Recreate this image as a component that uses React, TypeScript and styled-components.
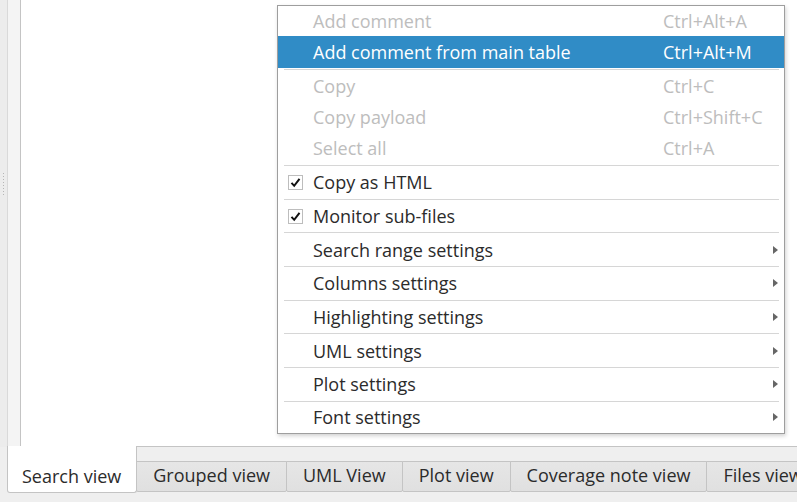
import React from "react";
import styled, { createGlobalStyle } from "styled-components";

const GlobalStyle = createGlobalStyle`
  html, body { margin: 0; padding: 0; }
  body {
    background: #efefef;
    font-family: "Open Sans", "Noto Sans", sans-serif;
    font-size: 18px;
    color: #2b2b2b;
    overflow: hidden;
  }
`;

const Window = styled.div`
  position: relative;
  width: 797px;
  height: 502px;
  display: flex;
  flex-direction: column;
  background: #efefef;
  overflow: hidden;
`;

const Top = styled.div`
  display: flex;
  height: 447px;
  flex: none;
`;

const Splitter = styled.div`
  width: 7px;
  border-right: 1px solid #d9d9d9;
  background: #ececec;
  display: flex;
  align-items: center;
  justify-content: center;
`;

const Grip = styled.div`
  width: 1px;
  height: 22px;
  margin-top: -80px;
  background: repeating-linear-gradient(to bottom, #b5b5b5 0 1px, transparent 1px 3px);
`;

const Gutter = styled.div`
  width: 12px;
  background: #f4f4f4;
`;

const Pane = styled.div`
  flex: 1;
  background: #ffffff;
  border-left: 1px solid #c4c4c4;
  border-bottom: 1px solid #c4c4c4;
`;

const TabBar = styled.div`
  display: flex;
  align-items: flex-start;
  padding-left: 7px;
  margin-top: -1px;
  white-space: nowrap;
`;

const Tab = styled.div<{ $active?: boolean }>`
  flex: none;
  box-sizing: border-box;
  border: 1px solid #c4c4c4;
  color: #2b2b2b;
  line-height: 24px;
  ${(p) =>
    p.$active
      ? `
    height: 47px;
    padding: 18px 15px 0 14px;
    background: #ffffff;
    border-top: none;
    border-radius: 0 0 3px 3px;
  `
      : `
    margin-top: 15px;
    height: 31px;
    padding: 1px 16px 0 16px;
    margin-left: -1px;
    background: linear-gradient(#e6e6e6, #e0e0e0);
    border-radius: 0 0 2px 2px;
  `}
`;

const Menu = styled.div`
  position: absolute;
  left: 277px;
  top: 5px;
  width: 508px;
  box-sizing: border-box;
  background: #ffffff;
  border: 1px solid #9e9e9e;
  box-shadow: 1px 2px 4px rgba(0, 0, 0, 0.18);
  display: flex;
  flex-direction: column;
`;

const Row = styled.div<{ $h: number; $disabled?: boolean; $selected?: boolean }>`
  display: grid;
  grid-template-columns: 35px 350px 1fr 14px;
  align-items: center;
  height: ${(p) => p.$h}px;
  color: ${(p) => (p.$selected ? "#ffffff" : p.$disabled ? "#bdbdbd" : "#2b2b2b")};
  background: ${(p) => (p.$selected ? "#308cc6" : "transparent")};
  white-space: nowrap;
`;

const Label = styled.span`
  grid-column: 2;
  line-height: 1;
`;

const Shortcut = styled.span`
  grid-column: 3;
  line-height: 1;
`;

const CheckCell = styled.span`
  grid-column: 1;
  display: flex;
  padding-left: 10px;
`;

const CheckBox = styled.span`
  width: 15px;
  height: 15px;
  box-sizing: border-box;
  border: 1px solid #bdbdbd;
  background: #fff;
  display: flex;
  align-items: center;
  justify-content: center;
`;

const ArrowCell = styled.span`
  grid-column: 4;
  display: flex;
  justify-content: flex-start;
  padding-left: 3px;
`;

const Arrow = styled.span`
  width: 0;
  height: 0;
  border-top: 4px solid transparent;
  border-bottom: 4px solid transparent;
  border-left: 5px solid #666;
`;

const Separator = styled.div<{ $gap?: number }>`
  height: 1px;
  margin: ${(p) => p.$gap ?? 0}px 5px 0 6px;
  background: #d6d6d6;
`;

const Check = () => (
  <svg width="11" height="11" viewBox="0 0 11 11">
    <path d="M1.5 5.8 L4.2 8.8 L9.5 1.8" fill="none" stroke="#111" strokeWidth="2" />
  </svg>
);

type Item = {
  label: string;
  shortcut?: string;
  disabled?: boolean;
  selected?: boolean;
  checked?: boolean;
  sub?: boolean;
};

const MenuRow: React.FC<{ item: Item; h: number }> = ({ item, h }) => (
  <Row $h={h} $disabled={item.disabled} $selected={item.selected}>
    {item.checked && (
      <CheckCell>
        <CheckBox>
          <Check />
        </CheckBox>
      </CheckCell>
    )}
    <Label>{item.label}</Label>
    {item.shortcut && <Shortcut>{item.shortcut}</Shortcut>}
    {item.sub && (
      <ArrowCell>
        <Arrow />
      </ArrowCell>
    )}
  </Row>
);

const lower: Item[] = [
  { label: "Copy as HTML", checked: true },
  { label: "Monitor sub-files", checked: true },
  { label: "Search range settings", sub: true },
  { label: "Columns settings", sub: true },
  { label: "Highlighting settings", sub: true },
  { label: "UML settings", sub: true },
  { label: "Plot settings", sub: true },
  { label: "Font settings", sub: true },
];

const tabs = ["Search view", "Grouped view", "UML View", "Plot view", "Coverage note view", "Files view"];

export default function App() {
  return (
    <>
      <GlobalStyle />
      <Window>
        <Top>
          <Splitter>
            <Grip />
          </Splitter>
          <Gutter />
          <Pane />
        </Top>
        <TabBar>
          {tabs.map((t, i) => (
            <Tab key={t} $active={i === 0}>
              {t}
            </Tab>
          ))}
        </TabBar>
        <Menu>
          <MenuRow h={30} item={{ label: "Add comment", shortcut: "Ctrl+Alt+A", disabled: true }} />
          <MenuRow h={32} item={{ label: "Add comment from main table", shortcut: "Ctrl+Alt+M", selected: true }} />
          <Separator $gap={1} />
          <MenuRow h={31} item={{ label: "Copy", shortcut: "Ctrl+C", disabled: true }} />
          <MenuRow h={31} item={{ label: "Copy payload", shortcut: "Ctrl+Shift+C", disabled: true }} />
          <MenuRow h={31} item={{ label: "Select all", shortcut: "Ctrl+A", disabled: true }} />
          {lower.map((it, i) => (
            <React.Fragment key={it.label}>
              <Separator $gap={i === 0 ? 2 : 0} />
              <MenuRow h={i === lower.length - 1 ? 31 : 32.7} item={it} />
            </React.Fragment>
          ))}
        </Menu>
      </Window>
    </>
  );
}
